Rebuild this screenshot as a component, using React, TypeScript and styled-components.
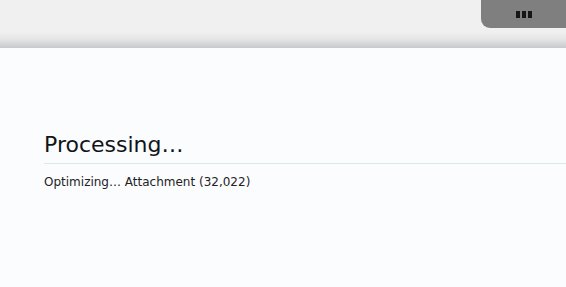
import React from 'react';
import styled, { createGlobalStyle } from 'styled-components';

const GlobalStyle = createGlobalStyle`
  html, body {
    margin: 0;
    padding: 0;
    background: #fbfcfe;
  }
  body {
    font-family: "DejaVu Sans", "Liberation Sans", sans-serif;
  }
`;

const Page = styled.div`
  width: 100%;
  min-height: 287px;
  background: #fbfcfe;
`;

const TopBar = styled.header`
  height: 48px;
  display: flex;
  justify-content: flex-end;
  align-items: flex-start;
  background: linear-gradient(
    to bottom,
    #f0f0f0 0px,
    #f0f0f0 32px,
    #e2e3e4 40px,
    #c6c8c9 48px
  );
`;

const MenuTab = styled.button`
  width: 85px;
  height: 28px;
  border: none;
  padding: 0;
  margin: 0;
  background: #7f7f7f;
  border-bottom-left-radius: 9px;
  display: flex;
  align-items: center;
  justify-content: center;
  gap: 2px;
  cursor: pointer;
`;

const Bar = styled.span`
  display: block;
  width: 4px;
  height: 7px;
  background: #161616;
  margin-top: 1px;
`;

const Content = styled.main`
  padding: 84px 0 0 44px;
`;

const Title = styled.h1`
  margin: 0;
  padding-bottom: 5px;
  font-size: 22px;
  line-height: 26px;
  font-weight: normal;
  color: #111416;
  border-bottom: 1px solid #dce9ec;
`;

const Status = styled.p`
  margin: 10px 0 0;
  font-size: 12px;
  line-height: 16px;
  color: #1e2224;
`;

export default function App() {
  return (
    <Page>
      <GlobalStyle />
      <TopBar>
        <MenuTab aria-label="Menu">
          <Bar />
          <Bar />
          <Bar />
        </MenuTab>
      </TopBar>
      <Content>
        <Title>Processing…</Title>
        <Status>Optimizing… Attachment (32,022)</Status>
      </Content>
    </Page>
  );
}
